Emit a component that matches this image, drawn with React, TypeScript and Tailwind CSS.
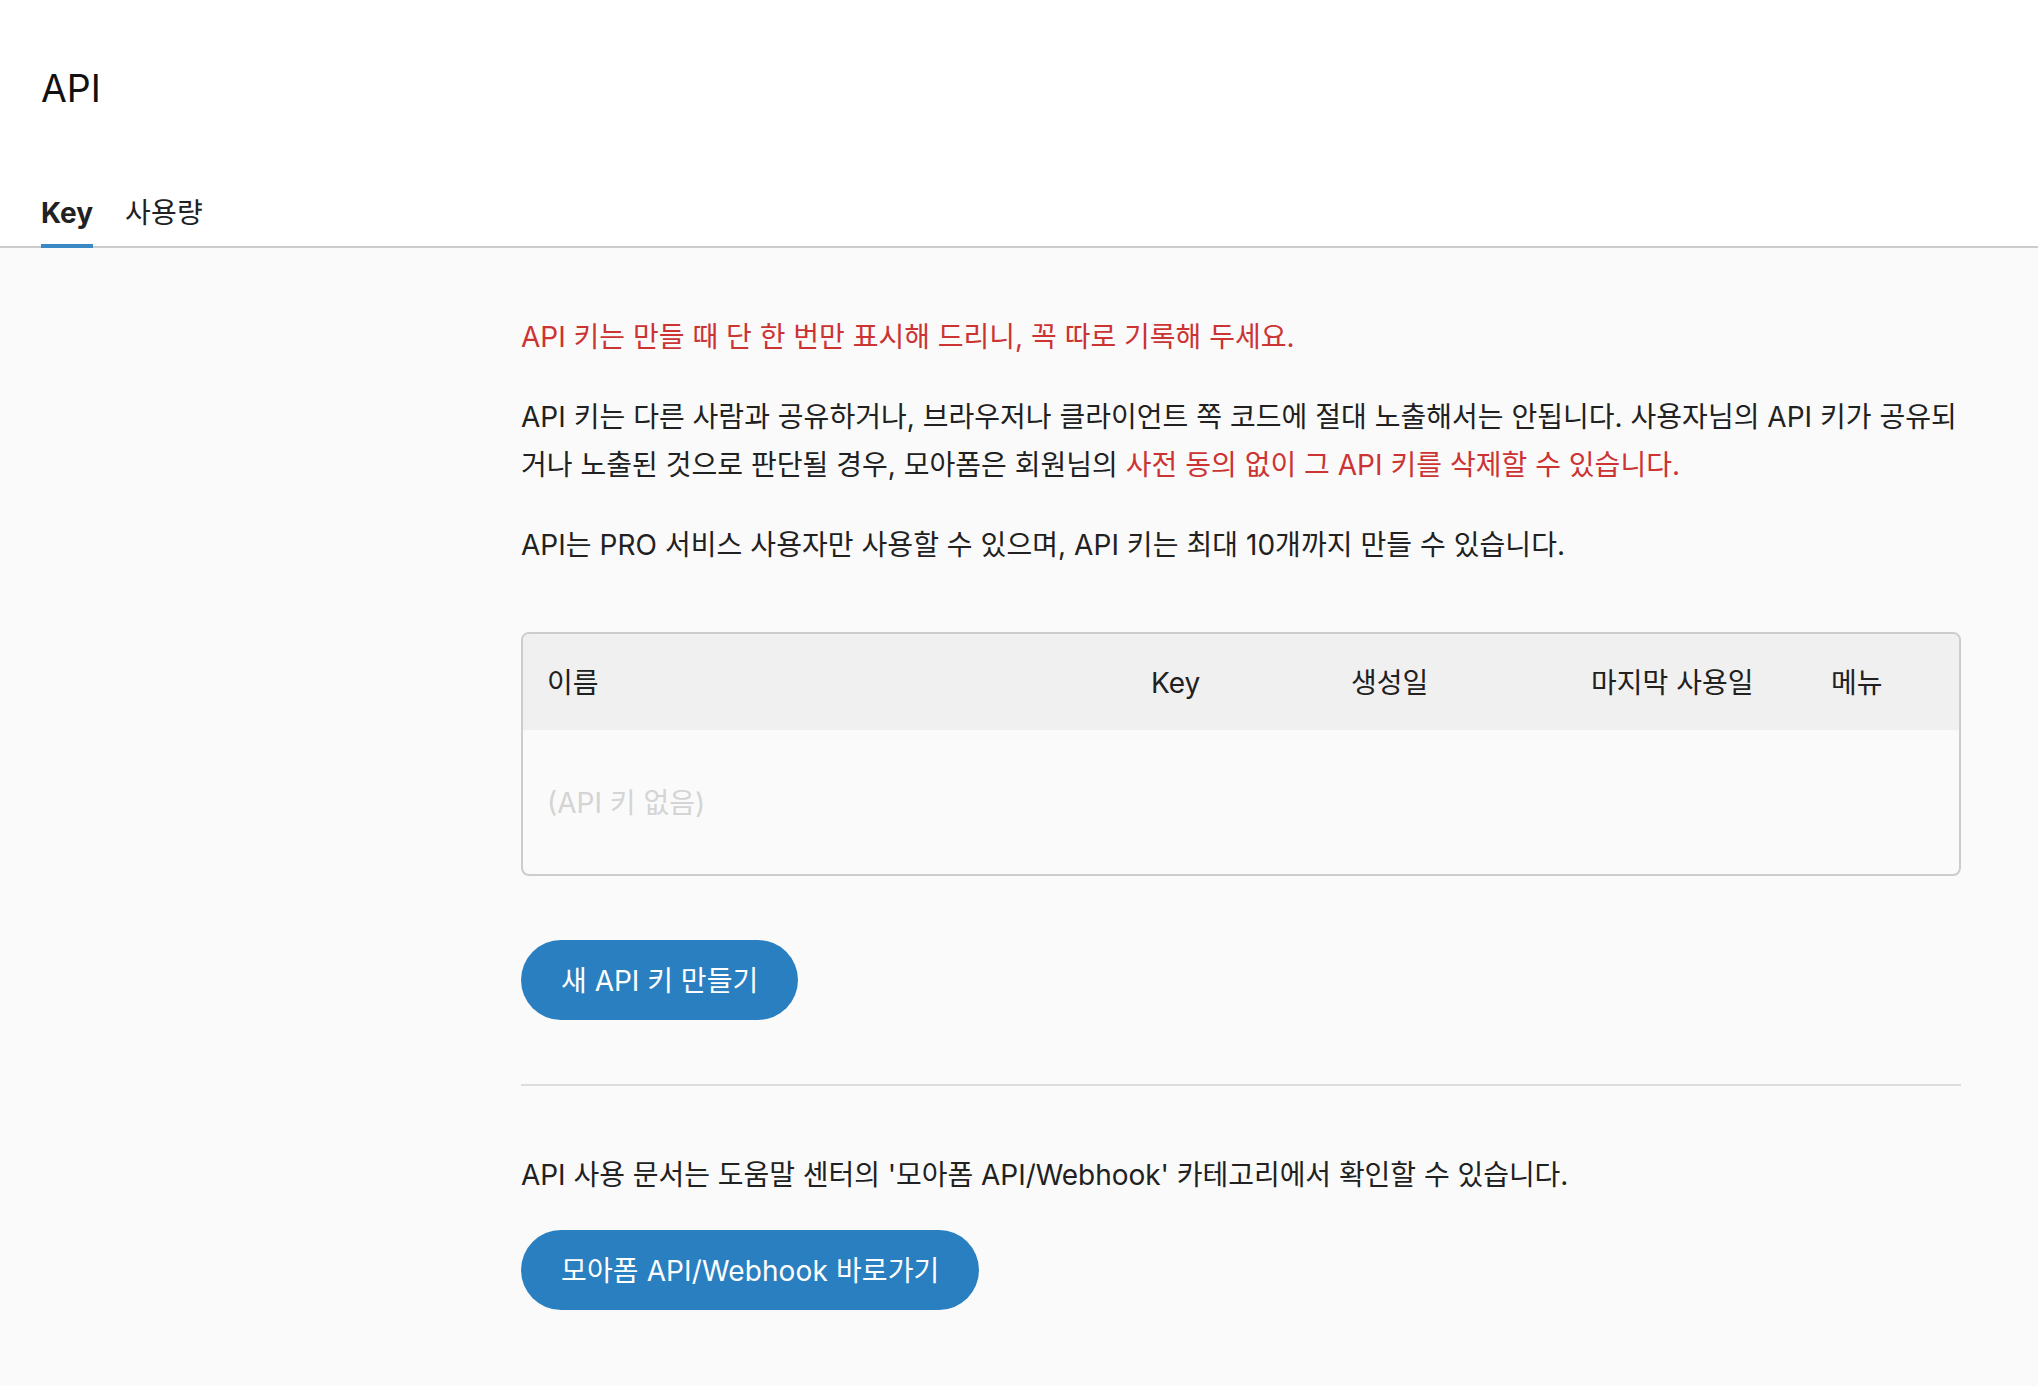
export default function App() {
  return (
    <div className="min-h-[1386px] bg-[#fafafa] font-['Inter','Noto_Sans_CJK_KR',sans-serif] text-[28px] leading-[48px] text-[#212121]">
      <header className="bg-white border-b-2 border-[#cccccc] h-[248px] px-[41px] flex flex-col">
        <h1 className="text-[37.5px] leading-[56px] mt-[61px] -mb-[1px] text-[#111111]">API</h1>
        <nav className="flex gap-[32px] mt-[64px] text-[28px] leading-[48px]">
          <span className="h-[68px] pt-[9px] border-b-4 border-[#3a89c5] font-bold">Key</span>
          <span className="pt-[9px] tracking-[0.2px]">사용량</span>
        </nav>
      </header>
      <main className="ml-[521px] w-[1440px] pt-[64px]">
        <p className="text-[#cc3333] pt-px -mb-px">API 키는 만들 때 단 한 번만 표시해 드리니, 꼭 따로 기록해 두세요.</p>
        <p className="mt-[32px] pt-px -mb-px tracking-[0.02px]">API 키는 다른 사람과 공유하거나, 브라우저나 클라이언트 쪽 코드에 절대 노출해서는 안됩니다. 사용자님의 API 키가 공유되거나 노출된 것으로 판단될 경우, 모아폼은 회원님의 <span className="text-[#cc3333]">사전 동의 없이 그 API 키를 삭제할 수 있습니다.</span></p>
        <p className="mt-[32px] pt-px -mb-px tracking-[0.05px]">API는 PRO 서비스 사용자만 사용할 수 있으며, API 키는 최대 10개까지 만들 수 있습니다.</p>
        <div className="mt-[64px] border-2 border-[#cccccc] rounded-[8px] overflow-hidden h-[244px]">
          <div className="grid grid-cols-[604px_200px_240px_240px_1fr] items-center h-[96px] bg-[#f0f0f0] pl-[24px] pt-[2px]">
            <span>이름</span>
            <span>Key</span>
            <span>생성일</span>
            <span>마지막 사용일</span>
            <span>메뉴</span>
          </div>
          <div className="h-[144px] flex items-center pl-[24px] pt-[2px] text-[#d4d4d4]">(API 키 없음)</div>
        </div>
        <button className="mt-[64px] block h-[80px] px-[40px] pt-[2px] rounded-full bg-[#2a7fc1] text-white">새 API 키 만들기</button>
        <hr className="mt-[64px] border-t-2 border-[#dddddd]" />
        <p className="mt-[64px] pt-px -mb-px tracking-[-0.04px]">API 사용 문서는 도움말 센터의 '모아폼 API/Webhook' 카테고리에서 확인할 수 있습니다.</p>
        <button className="mt-[32px] block h-[80px] px-[40px] pt-[2px] rounded-full bg-[#2a7fc1] text-white tracking-[0.12px]">모아폼 API/Webhook 바로가기</button>
      </main>
    </div>
  );
}
